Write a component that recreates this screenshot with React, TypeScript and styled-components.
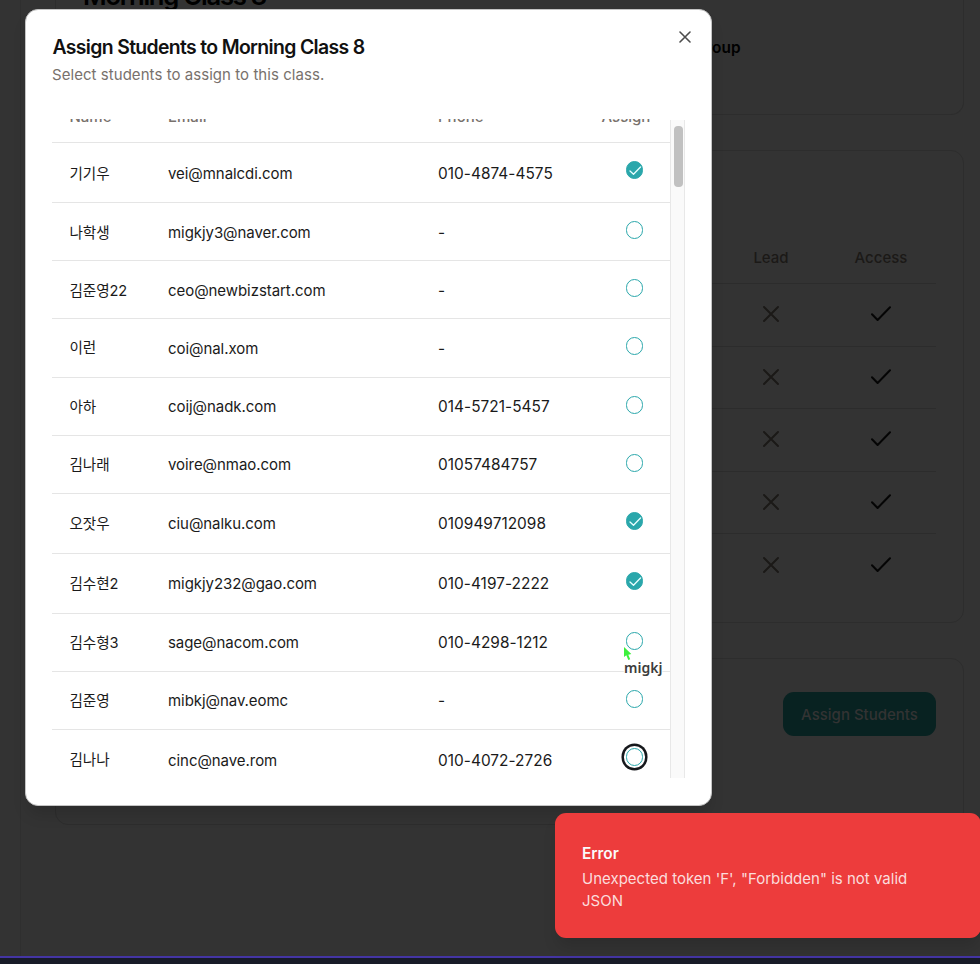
import React from 'react';
import styled, { createGlobalStyle, css } from 'styled-components';

const Global = createGlobalStyle`
  *, *::before, *::after { box-sizing: border-box; }
  body { margin: 0; background: #333; overflow: hidden; }
`;

const Screen = styled.div`
  position: relative;
  width: 980px;
  height: 964px;
  overflow: hidden;
  display: flex;
  flex-direction: column;
  background: #333333;
  font-family: Inter, "Noto Sans CJK KR", sans-serif;
  font-size: 15px;
  color: #000;
`;
const Workspace = styled.div`
  flex: 1;
  min-height: 0;
  display: flex;
`;
const Sidebar = styled.aside`
  width: 21px;
  flex: none;
  border-right: 1px solid #2f2f2f;
`;
const Cards = styled.main`
  flex: 1;
  padding: 0 16px 0 34px;
  display: flex;
  flex-direction: column;
  gap: 35px;
`;
const Card = styled.section<{ $height: number; $openTop?: boolean }>`
  flex: none;
  height: ${p => p.$height}px;
  padding: 0 27px;
  border: 1px solid #2d2d2d;
  border-radius: 13px;
  ${p => p.$openTop && css`border-top: 0; border-radius: 0 0 13px 13px;`}
`;
const ClassTitle = styled.h1`
  margin: -20px 0 0;
  font-size: 25.6px;
  line-height: 32px;
  font-weight: 600;
  letter-spacing: -1.22px;
`;
const ClassType = styled.div`
  width: 657.5px;
  margin-top: 26px;
  text-align: right;
  font-size: 15.4px;
  line-height: 20px;
  font-weight: 600;
`;
const Permissions = styled.div`
  padding-top: 80px;
`;
const PermissionRow = styled.div<{ $head?: boolean }>`
  display: grid;
  grid-template-columns: 1fr 110px 110px;
  align-items: center;
  justify-items: center;
  height: ${p => (p.$head ? 53 : 62.6)}px;
  padding-bottom: ${p => (p.$head ? 0 : 1)}px;
  border-bottom: 1px solid #2c2c2c;
  font-weight: 500;
  color: #1b1917;
  &:last-child { border-bottom: 0; }
  svg { display: block; }
`;
const CardActions = styled.div`
  display: flex;
  justify-content: flex-end;
  padding-top: 33px;
`;
const AssignButton = styled.button`
  width: 153px;
  height: 44px;
  border: 0;
  border-radius: 11px;
  background: #082221;
  color: #333;
  font: inherit;
  font-weight: 500;
`;
const StatusBar = styled.footer`
  height: 8px;
  flex: none;
  border-top: 2px solid #4435a4;
  background: #171b27;
`;

const Dialog = styled.div`
  position: absolute;
  left: 25px;
  top: 9px;
  width: 687px;
  height: 797px;
  border: 1px solid #c4c4c4;
  border-radius: 13px;
  background: #fff;
  box-shadow: 0 11px 16px -3px rgba(0, 0, 0, 0.14);
  padding: 0 26px;
  display: flex;
  flex-direction: column;
`;
const DialogHeader = styled.header`
  height: 109px;
  flex: none;
  padding-top: 24px;
  display: flex;
  justify-content: space-between;
`;
const DialogTitle = styled.h2`
  margin: 0 0 0 0.5px;
  font-size: 19.4px;
  line-height: 26px;
  font-weight: 600;
  letter-spacing: -0.65px;
  color: #111;
`;
const DialogDescription = styled.p`
  margin: 5px 0 0;
  line-height: 20px;
  letter-spacing: 0.05px;
  color: #78716c;
`;
const CloseButton = styled.button`
  width: 12px;
  height: 12px;
  margin: -3.5px -6px 0 0;
  padding: 0;
  border: 0;
  background: none;
`;
const ScrollArea = styled.div`
  height: 659px;
  display: flex;
  overflow: hidden;
`;
const StudentTable = styled.div`
  flex: 1;
  overflow: hidden;
`;
const columns = css`
  display: grid;
  grid-template-columns: 98.5px 270px 187.5px 1fr;
  padding-left: 17.5px;
`;
const TableHead = styled.div`
  ${columns}
  height: 24px;
  border-bottom: 1px solid #e5e5e5;
  font-weight: 500;
  color: #78716c;
  line-height: 20px;
`;
const HeadLabel = styled.span<{ $shift?: number }>`
  margin-top: -12px;
  margin-left: ${p => p.$shift ?? 0}px;
  white-space: nowrap;
`;
const StudentRow = styled.div<{ $height: number }>`
  ${columns}
  height: ${p => p.$height}px;
  align-items: center;
  border-bottom: 1px solid #e5e5e5;
  color: #1a1a1a;
  line-height: 22px;
  &:nth-of-type(-n + 4) > span { padding-top: 2.5px; }
  &:last-of-type { border-bottom: 0; }
`;
const StudentName = styled.span`
  font-size: 14.6px;
  letter-spacing: -0.1px;
`;
const Email = styled.span`
  padding-top: 1px;
  letter-spacing: -0.06px;
`;
const Phone = styled.span`
  padding-top: 1px;
  font-size: 15.4px;
  letter-spacing: 0.04px;
`;
const Toggle = styled.button<{ $checked?: boolean; $focused?: boolean }>`
  align-self: start;
  width: 17.5px;
  height: 17.5px;
  margin-top: 18px;
  padding: 0;
  display: grid;
  place-items: center;
  border: 1px solid #2aa7ab;
  border-radius: 50%;
  background: ${p => (p.$checked ? '#2aa7ab' : '#fff')};
  ${p => p.$focused && css`box-shadow: 0 0 0 2px #fff, 0 0 0 4.5px #16181c;`}
`;
const ScrollTrack = styled.div`
  width: 15px;
  flex: none;
  margin-top: 1px;
  padding: 5.5px 0 0 3px;
  border: 1px solid #e8e8e8;
  border-width: 0 1px;
  background: #fafafa;
`;
const ScrollThumb = styled.div`
  width: 8.5px;
  height: 61.5px;
  border-radius: 4px;
  background: #c1c1c1;
`;

const Toast = styled.div`
  position: absolute;
  left: 555px;
  top: 813px;
  width: 426px;
  height: 125px;
  padding: 29.5px 27px;
  border-radius: 11px;
  background: #ed3c3c;
  color: #fafafa;
  box-shadow: 0 11px 16px -3px rgba(0, 0, 0, 0.14);
`;
const ToastTitle = styled.div`
  font-size: 15.4px;
  font-weight: 600;
  line-height: 22px;
`;
const ToastText = styled.div`
  margin-top: 3.5px;
  width: 345px;
  line-height: 22px;
  letter-spacing: 0.01px;
  color: #fbdcdc;
`;
const RemoteCursor = styled.div`
  position: absolute;
  left: 623px;
  top: 646px;
  svg { display: block; }
`;
const CursorName = styled.div`
  margin: -4px 0 0 1px;
  font-family: "Noto Sans", sans-serif;
  font-size: 14px;
  font-weight: 600;
  line-height: 20px;
  color: #3c3c3c;
  text-shadow: 0 0 1px #fff, 1px 0 1px #fff, -1px 0 1px #fff, 0 1px 1px #fff, 0 -1px 1px #fff;
`;

const CrossIcon = ({ size, color, width = 1.5 }: { size: number; color: string; width?: number }) => (
  <svg width={size} height={size} viewBox={`0 0 ${size} ${size}`} fill="none" stroke={color} strokeWidth={width} strokeLinecap="round">
    <path d={`M1 1L${size - 1} ${size - 1}M${size - 1} 1L1 ${size - 1}`} />
  </svg>
);
const CheckIcon = () => (
  <svg width="20" height="16" viewBox="0 0 20 16" fill="none" stroke="#050505" strokeWidth="2" strokeLinecap="round" strokeLinejoin="round">
    <path d="M1 8.2L6.6 14L19 1.2" />
  </svg>
);
const SmallCheck = () => (
  <svg width="16" height="16" viewBox="0 0 16 16" fill="none" stroke="#e9ffff" strokeWidth="1.3" strokeLinecap="round" strokeLinejoin="round">
    <path d="M3 9L6.5 12.2L13.5 5" />
  </svg>
);

type Student = { name: string; email: string; phone: string; height: number; checked?: boolean; focused?: boolean };
const students: Student[] = [
  { name: '기기우', email: 'vei@mnalcdi.com', phone: '010-4874-4575', height: 60, checked: true },
  { name: '나학생', email: 'migkjy3@naver.com', phone: '-', height: 58 },
  { name: '김준영22', email: 'ceo@newbizstart.com', phone: '-', height: 58 },
  { name: '이런', email: 'coi@nal.xom', phone: '-', height: 59 },
  { name: '아하', email: 'coij@nadk.com', phone: '014-5721-5457', height: 58 },
  { name: '김나래', email: 'voire@nmao.com', phone: '01057484757', height: 58 },
  { name: '오잣우', email: 'ciu@nalku.com', phone: '010949712098', height: 60, checked: true },
  { name: '김수현2', email: 'migkjy232@gao.com', phone: '010-4197-2222', height: 60, checked: true },
  { name: '김수형3', email: 'sage@nacom.com', phone: '010-4298-1212', height: 58 },
  { name: '김준영', email: 'mibkj@nav.eomc', phone: '-', height: 58 },
  { name: '김나나', email: 'cinc@nave.rom', phone: '010-4072-2726', height: 60, focused: true },
];

export default function App() {
  return (
    <Screen>
      <Global />
      <Workspace>
        <Sidebar />
        <Cards>
          <Card $height={115} $openTop>
            <ClassTitle>Morning Class 8</ClassTitle>
            <ClassType>Group</ClassType>
          </Card>
          <Card $height={473}>
            <Permissions>
              <PermissionRow $head>
                <span />
                <span>Lead</span>
                <span>Access</span>
              </PermissionRow>
              {[1, 2, 3, 4, 5].map(n => (
                <PermissionRow key={n}>
                  <span />
                  <CrossIcon size={16} color="#1b1917" width={1.9} />
                  <CheckIcon />
                </PermissionRow>
              ))}
            </Permissions>
          </Card>
          <Card $height={167}>
            <CardActions>
              <AssignButton>Assign Students</AssignButton>
            </CardActions>
          </Card>
        </Cards>
      </Workspace>
      <StatusBar />

      <Dialog role="dialog">
        <DialogHeader>
          <div>
            <DialogTitle>Assign Students to Morning Class 8</DialogTitle>
            <DialogDescription>Select students to assign to this class.</DialogDescription>
          </div>
          <CloseButton aria-label="Close">
            <CrossIcon size={12} color="#4d4d4d" width={1.6} />
          </CloseButton>
        </DialogHeader>
        <ScrollArea>
          <StudentTable>
            <TableHead>
              <HeadLabel>Name</HeadLabel>
              <HeadLabel>Email</HeadLabel>
              <HeadLabel>Phone</HeadLabel>
              <HeadLabel $shift={-24}>Assign</HeadLabel>
            </TableHead>
            {students.map(s => (
              <StudentRow key={s.email} $height={s.height}>
                <StudentName>{s.name}</StudentName>
                <Email>{s.email}</Email>
                <Phone>{s.phone}</Phone>
                <Toggle $checked={s.checked} $focused={s.focused} aria-label={s.name}>
                  {s.checked && <SmallCheck />}
                </Toggle>
              </StudentRow>
            ))}
          </StudentTable>
          <ScrollTrack>
            <ScrollThumb />
          </ScrollTrack>
        </ScrollArea>
      </Dialog>

      <Toast role="alert">
        <ToastTitle>Error</ToastTitle>
        <ToastText>Unexpected token 'F', "Forbidden" is not valid JSON</ToastText>
      </Toast>

      <RemoteCursor>
        <svg width="10" height="16" viewBox="0 0 10 16" fill="#3df03d">
          <path d="M1 1V11L3.3 9.2L5.3 14L7.2 13.2L5.3 8.7L8.3 8.1Z" />
        </svg>
        <CursorName>migkj</CursorName>
      </RemoteCursor>
    </Screen>
  );
}
